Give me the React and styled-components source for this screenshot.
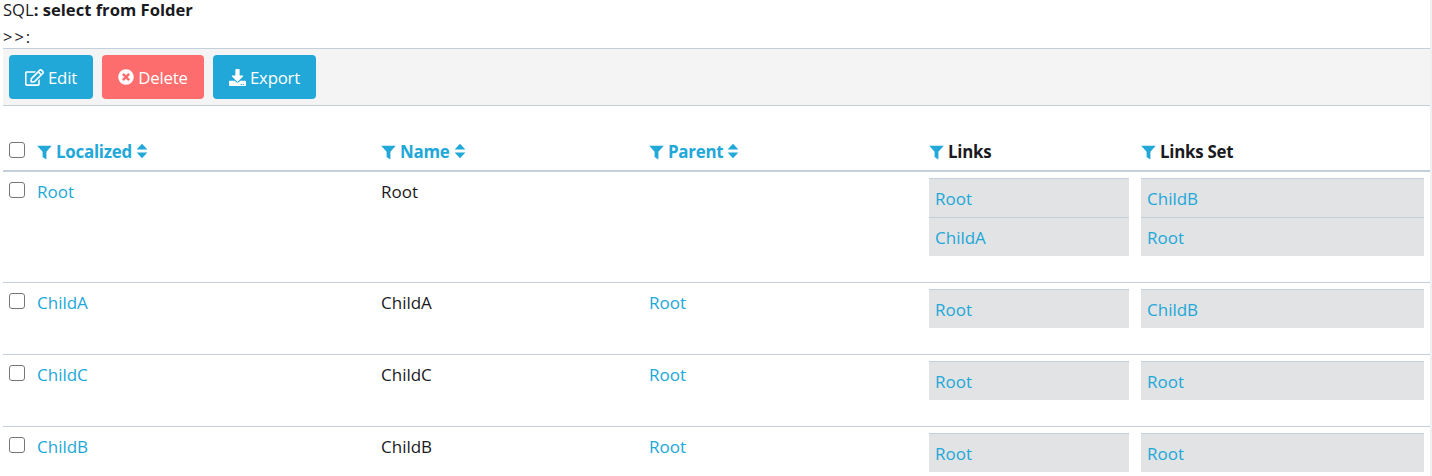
import React from "react";
import styled, { createGlobalStyle } from "styled-components";
import { FaRegEdit, FaTimesCircle, FaDownload } from "react-icons/fa";

const Global = createGlobalStyle`
  html, body { margin: 0; padding: 0; background: #fff; overflow: hidden; }
  body { font-family: "Open Sans", "Noto Sans", sans-serif; font-size: 16px; color: #1a1a22; }
`;
const Shell = styled.div`
  display: flex;
  justify-content: space-between;
  width: 1432px;
  height: 476px;
  overflow: hidden;
`;
const Rail = styled.div`
  width: 2px;
  background: #f0f0f0;
`;
const Page = styled.div`
  width: 1430px;
  height: 476px;
  padding-left: 3px;
  box-sizing: border-box;
  overflow: hidden;
`;
const SqlLine = styled.div`
  height: 23px;
  line-height: 20px;
  font-size: 16.6px;
  white-space: nowrap;
  b { font-weight: 700; }
`;
const PromptLine = styled.div`
  height: 25px;
  line-height: 27px;
  font-size: 16.5px;
  letter-spacing: 2px;
`;
const Toolbar = styled.div`
  display: flex;
  gap: 9px;
  align-items: flex-start;
  padding: 6px 6px 0;
  height: 50px;
  background: #f4f4f5;
  border-top: 1px solid #c3d0db;
  border-bottom: 1px solid #c3d0db;
`;
const Button = styled.button`
  display: inline-flex;
  align-items: center;
  justify-content: center;
  gap: 4px;
  height: 44px;
  width: ${(p) => p.$w}px;
  padding: 0;
  border: 0;
  border-radius: 4px;
  background: ${(p) => (p.$danger ? "#fd6d6d" : "#21a8d8")};
  color: #fff;
  font: 400 16.8px "Open Sans", sans-serif;
  letter-spacing: -0.2px;
  svg { flex: none; }
`;
const Row = styled.div`
  display: grid;
  grid-template-columns: 34px 344px 268px 280px 212px 283px;
  height: ${(p) => p.$h}px;
  border-bottom: ${(p) => (p.$head ? 2 : 1)}px solid #c3d0db;
  box-sizing: border-box;
`;
const HeadRow = styled(Row)`
  margin-top: 29px;
  align-items: start;
`;
const HeadCell = styled.div`
  display: flex;
  align-items: center;
  gap: 4px;
  height: 20px;
  margin-top: 6px;
  font-weight: 700;
  font-size: 16.9px;
  letter-spacing: -0.25px;
  color: ${(p) => (p.$plain ? "#1a1a22" : "#21a8d8")};
`;
const CheckCell = styled.div`
  padding: ${(p) => p.$top}px 0 0 6px;
`;
const Check = styled.span`
  display: block;
  width: 16px;
  height: 16px;
  box-sizing: border-box;
  background: #fff;
  border: 1px solid #767676;
  border-radius: 3px;
`;
const Cell = styled.div`
  padding-top: 8px;
  height: 24px;
  line-height: 24px;
  font-size: 17px;
  color: #1a1a22;
`;
const Link = styled.a`
  color: #21a8d8;
  text-decoration: none;
`;
const ListCell = styled.div`
  padding-top: 6px;
`;
const LinkList = styled.div`
  background: #e2e3e5;
  border-top: 1px solid #c3d0db;
  margin-right: ${(p) => p.$mr}px;
`;
const LinkItem = styled.div`
  height: 38px;
  box-sizing: border-box;
  padding: 1px 0 0 6px;
  line-height: 37px;
  font-size: 17px;
  & + & { height: 39px; border-top: 1px solid #c3d0db; }
`;
const FunnelIcon = styled.svg`
  flex: none;
  margin-top: 2px;
`;
const SortIcon = styled.svg`
  flex: none;
`;
const Funnel = () => (
  <FunnelIcon width="15" height="15" viewBox="0 0 15 15">
    <path d="M0.2 0.8h14.6L9.4 6.8v7.8L5.6 12V6.8z" fill="#21a8d8" />
  </FunnelIcon>
);
const Sort = () => (
  <SortIcon width="12" height="16" viewBox="0 0 12 16">
    <path d="M6 0.8l5.4 5.6H0.6zM6 15.2L0.6 9.6h10.8z" fill="#21a8d8" />
  </SortIcon>
);

const rows = [
  { n: "Root", p: null, a: ["Root", "ChildA"], b: ["ChildB", "Root"], h: 111, top: 10 },
  { n: "ChildA", p: "Root", a: ["Root"], b: ["ChildB"], h: 72, top: 10 },
  { n: "ChildC", p: "Root", a: ["Root"], b: ["Root"], h: 72, top: 10 },
  { n: "ChildB", p: "Root", a: ["Root"], b: ["Root"], h: 72, top: 10 },
];

export default function App() {
  return (
    <Shell>
      <Global />
      <Page>
        <SqlLine>SQL<b>: select from Folder</b></SqlLine>
        <PromptLine>&gt;&gt;:</PromptLine>
        <Toolbar>
          <Button $w={84}><FaRegEdit size={19} />Edit</Button>
          <Button $w={102} $danger><FaTimesCircle size={16} />Delete</Button>
          <Button $w={103}><FaDownload size={17} />Export</Button>
        </Toolbar>
        <HeadRow $h={37} $head>
          <CheckCell $top={7}><Check /></CheckCell>
          <HeadCell><Funnel />Localized<Sort /></HeadCell>
          <HeadCell><Funnel />Name<Sort /></HeadCell>
          <HeadCell><Funnel />Parent<Sort /></HeadCell>
          <HeadCell $plain><Funnel />Links</HeadCell>
          <HeadCell $plain><Funnel />Links Set</HeadCell>
        </HeadRow>
        {rows.map((r) => (
          <Row key={r.n} $h={r.h}>
            <CheckCell $top={r.top}><Check /></CheckCell>
            <Cell><Link>{r.n}</Link></Cell>
            <Cell>{r.n}</Cell>
            <Cell>{r.p && <Link>{r.p}</Link>}</Cell>
            <ListCell>
              <LinkList $mr={12}>{r.a.map((x) => <LinkItem key={x}><Link>{x}</Link></LinkItem>)}</LinkList>
            </ListCell>
            <ListCell>
              <LinkList $mr={0}>{r.b.map((x) => <LinkItem key={x}><Link>{x}</Link></LinkItem>)}</LinkList>
            </ListCell>
          </Row>
        ))}
      </Page>
      <Rail />
    </Shell>
  );
}
